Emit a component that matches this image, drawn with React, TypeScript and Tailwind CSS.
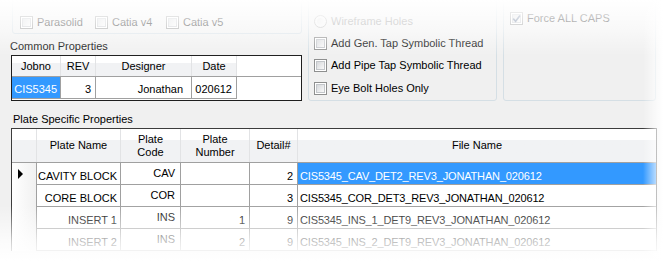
import React from 'react';

type PlateRow = {
  name: string;
  code: string;
  num: string;
  detail: string;
  file: string;
  current?: boolean;
};

const plateRows: PlateRow[] = [
  { name: 'CAVITY BLOCK', code: 'CAV', num: '', detail: '2', file: 'CIS5345_CAV_DET2_REV3_JONATHAN_020612', current: true },
  { name: 'CORE BLOCK', code: 'COR', num: '', detail: '3', file: 'CIS5345_COR_DET3_REV3_JONATHAN_020612' },
  { name: 'INSERT 1', code: 'INS', num: '1', detail: '9', file: 'CIS5345_INS_1_DET9_REV3_JONATHAN_020612' },
  { name: 'INSERT 2', code: 'INS', num: '2', detail: '9', file: 'CIS5345_INS_2_DET9_REV3_JONATHAN_020612' },
];

const CheckBox: React.FC<{ checked?: boolean }> = ({ checked }) => (
  <span className="relative flex h-[13px] w-[13px] shrink-0 border border-[#8e8f8f] bg-white p-[1px]">
    <span className="flex-1 border border-[#c3c6ca] bg-linear-to-br from-[#d6d8db] to-[#f9f9f9]" />
    {checked && (
      <svg className="absolute left-[1px] top-[1px]" width="9" height="9" viewBox="0 0 9 9">
        <path d="M1.2 4.6 L3.6 7.2 L8 1.4" stroke="#4d6185" strokeWidth="1.6" fill="none" />
      </svg>
    )}
  </span>
);

const Radio = () => (
  <span className="flex h-[13px] w-[13px] shrink-0 items-center justify-center rounded-full border border-[#b4b4b4] bg-[#f4f4f4]">
    <span className="h-[7px] w-[7px] rounded-full bg-linear-to-br from-[#e2e2e2] to-[#f8f8f8]" />
  </span>
);

const Option: React.FC<{ label: string; checked?: boolean; radio?: boolean; disabled?: boolean; className?: string }> = ({
  label,
  checked,
  radio,
  disabled,
  className = '',
}) => (
  <div className={`flex items-center gap-[4px] ${className}`}>
    {radio ? <Radio /> : <CheckBox checked={checked} />}
    <span className={disabled ? 'text-[#8d8d8d]' : 'text-black'}>{label}</span>
  </div>
);

const headBg = 'bg-linear-to-b from-white from-[34%] to-[#f1f2f4] to-[34%]';

export default function App() {
  return (
    <div className="relative h-[261px] w-[663px] overflow-hidden bg-[#f0f0f0] font-['Liberation_Sans',Arial,sans-serif] text-[11px] leading-[13px] text-black">
      {/* top block: export options, common props, hole options */}
      <div className="-mt-[10px] flex pl-[10px]">
        <div className="flex w-[292px] flex-col">
          <div className="ml-[2px] flex h-[44px] items-center rounded-[3px] border border-[#d5dfe5] pl-[7px] pt-[21px]">
            <Option label="Parasolid" className="w-[75px]" />
            <Option label="Catia v4" className="w-[71px]" />
            <Option label="Catia v5" />
          </div>
          <div className="mt-[6px] h-[13px]">Common Properties</div>
          <div className="ml-[1px] mt-[2px] flex h-[46px] w-[291px] flex-col border border-[#1e1e1e] bg-white">
            <div className={`flex h-[21px] border-b border-[#a0a0a0] ${headBg}`}>
              <div className="flex w-[49px] items-center justify-center border-r border-[#e2e3e5]">Jobno</div>
              <div className="flex w-[35px] items-center justify-center border-r border-[#e2e3e5]">REV</div>
              <div className="flex w-[96px] items-center justify-center border-r border-[#e2e3e5]">Designer</div>
              <div className="flex w-[45px] items-center justify-center border-r border-[#e2e3e5]">Date</div>
              <div className="flex-1 bg-white" />
            </div>
            <div className="flex h-[22px]">
              <div className="flex w-[49px] items-end justify-end border-b border-r border-[#a0a0a0] bg-[#3399ff] pb-[2px] pr-[3px] text-white">CIS5345</div>
              <div className="flex w-[35px] items-end justify-end border-b border-r border-[#a0a0a0] pb-[2px] pr-[4px]">3</div>
              <div className="flex w-[96px] items-end justify-end border-b border-r border-[#a0a0a0] pb-[2px] pr-[8px]">Jonathan</div>
              <div className="flex w-[45px] items-end justify-end border-b border-r border-[#a0a0a0] pb-[2px] pr-[4px]">020612</div>
            </div>
          </div>
        </div>

        <div className="ml-[6px] flex h-[111px] w-[189px] flex-col rounded-[3px] border border-[#d5dfe5] pl-[5px] pt-[19px]">
          <Option label="Wireframe Holes" radio disabled className="h-[22px]" />
          <Option label="Add Gen. Tap Symbolic Thread" className="h-[22px]" />
          <Option label="Add Pipe Tap Symbolic Thread" className="h-[23px]" />
          <Option label="Eye Bolt Holes Only" className="h-[23px]" />
        </div>

        <div className="ml-[6px] flex h-[111px] w-[153px] flex-col rounded-[3px] border border-[#d5dfe5] pl-[6px] pt-[16px]">
          <Option label="Force ALL CAPS" checked className="h-[22px]" />
        </div>
      </div>

      {/* plate grid */}
      <div className="mt-[12px] h-[13px] pl-[13px]">Plate Specific Properties</div>
      <div className="ml-[11px] mt-[2px] flex w-[646px] flex-col border-l border-r border-t border-[#3c3c3c] bg-white">
        <div className={`flex h-[34px] border-b border-[#a0a0a0] ${headBg}`}>
          <div className="w-[25px] border-r border-[#e2e3e5]" />
          <div className="flex w-[84px] items-center justify-center border-r border-[#e2e3e5]">Plate Name</div>
          <div className="flex w-[60px] items-center justify-center border-r border-[#e2e3e5] text-center">
            Plate
            <br />
            Code
          </div>
          <div className="flex w-[69px] items-center justify-center border-r border-[#e2e3e5] text-center">
            Plate
            <br />
            Number
          </div>
          <div className="flex w-[48px] items-center justify-center border-r border-[#e2e3e5]">Detail#</div>
          <div className="flex flex-1 items-center justify-center">File Name</div>
        </div>
        {plateRows.map((r) => (
          <div key={r.file} className="flex h-[22px]">
            <div className="flex w-[25px] items-center border-r border-[#a0a0a0] bg-linear-to-r from-white to-[#f1f1f1] pl-[6px]">
              {r.current && (
                <svg width="6" height="10" viewBox="0 0 6 10">
                  <path d="M0 0 L5 5 L0 10 Z" fill="#000" />
                </svg>
              )}
            </div>
            <div className="flex w-[84px] items-end justify-end border-b border-r border-[#a0a0a0] pb-[1px] pr-[3px]">{r.name}</div>
            <div className="flex w-[60px] items-end justify-end border-b border-r border-[#a0a0a0] pb-[4px] pr-[5px]">{r.code}</div>
            <div className="flex w-[69px] items-end justify-end border-b border-r border-[#a0a0a0] pb-[1px] pr-[4px]">{r.num}</div>
            <div className="flex w-[48px] items-end justify-end border-b border-r border-[#a0a0a0] pb-[1px] pr-[4px]">{r.detail}</div>
            <div
              className={`flex flex-1 items-end border-b border-[#a0a0a0] pb-[1px] pl-[2px] tracking-[-0.15px] ${
                r.current ? 'bg-[#3399ff] text-white' : ''
              }`}
            >
              {r.file}
            </div>
          </div>
        ))}
      </div>

      {/* screenshot fades */}
      <div className="pointer-events-none absolute inset-x-0 top-0 h-[56px] bg-linear-to-b from-white via-white/60 to-white/0" />
      <div className="pointer-events-none absolute inset-x-0 bottom-0 h-[56px] bg-linear-to-b from-white/0 via-white/75 via-[65%] to-white" />
      <div className="pointer-events-none absolute inset-y-0 right-0 w-[20px] bg-linear-to-r from-white/0 to-white" />
    </div>
  );
}
